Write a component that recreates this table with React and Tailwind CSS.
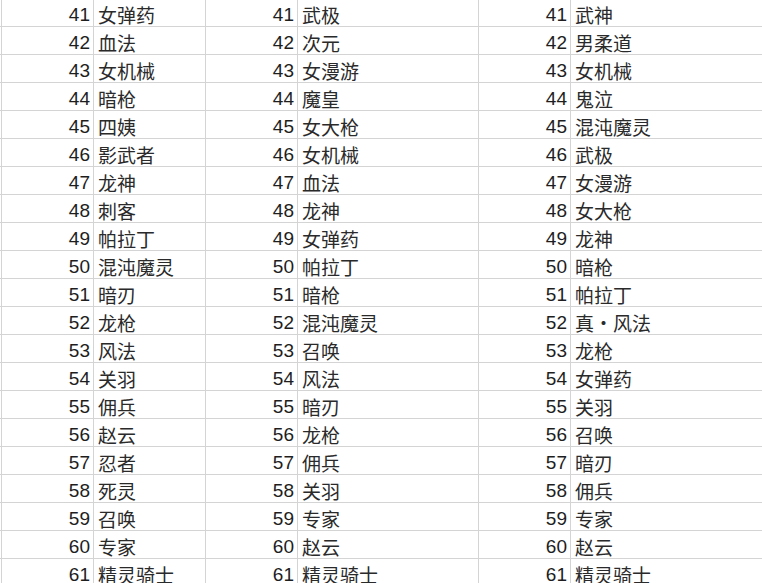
import React from "react";

const c1 = ["女弹药","血法","女机械","暗枪","四姨","影武者","龙神","刺客","帕拉丁","混沌魔灵","暗刃","龙枪","风法","关羽","佣兵","赵云","忍者","死灵","召唤","专家","精灵骑士"];
const c2 = ["武极","次元","女漫游","魔皇","女大枪","女机械","血法","龙神","女弹药","帕拉丁","暗枪","混沌魔灵","召唤","风法","暗刃","龙枪","佣兵","关羽","专家","赵云","精灵骑士"];
const c3 = ["武神","男柔道","女机械","鬼泣","混沌魔灵","武极","女漫游","女大枪","龙神","暗枪","帕拉丁","真•风法","龙枪","女弹药","关羽","召唤","暗刃","佣兵","专家","赵云","精灵骑士"];

const numCls = "h-full border-r border-[#d4d4d4] flex items-end justify-end pr-[3px] text-[19px] leading-[22px] text-[#1e1e1e] font-['Liberation_Sans',Arial,sans-serif]";
const nameCls = "h-full border-r border-[#d4d4d4] flex items-end pl-[4px] text-[19px] leading-[22px] text-[#2a2a2a] font-['Noto_Sans_CJK_SC','Noto_Sans',sans-serif] whitespace-nowrap";

export default function App() {
  return (
    <div className="w-[762px] h-[583px] overflow-hidden bg-white">
      <div className="mt-[-1px] flex flex-col">
        {c1.map((n, i) => (
          <div key={i} className="flex h-[28px] border-b border-[#d4d4d4]">
            <div className="w-[2px] shrink-0 h-full border-r border-[#d4d4d4]" />
            <div className={`w-[92px] shrink-0 ${numCls}`}>{41 + i}</div>
            <div className={`w-[112px] shrink-0 ${nameCls}`}>{n}</div>
            <div className={`w-[92px] shrink-0 ${numCls}`}>{41 + i}</div>
            <div className={`w-[181px] shrink-0 ${nameCls}`}>{c2[i]}</div>
            <div className={`w-[92px] shrink-0 ${numCls}`}>{41 + i}</div>
            <div className={`flex-1 ${nameCls} border-r-0`}>{c3[i]}</div>
          </div>
        ))}
      </div>
    </div>
  );
}
